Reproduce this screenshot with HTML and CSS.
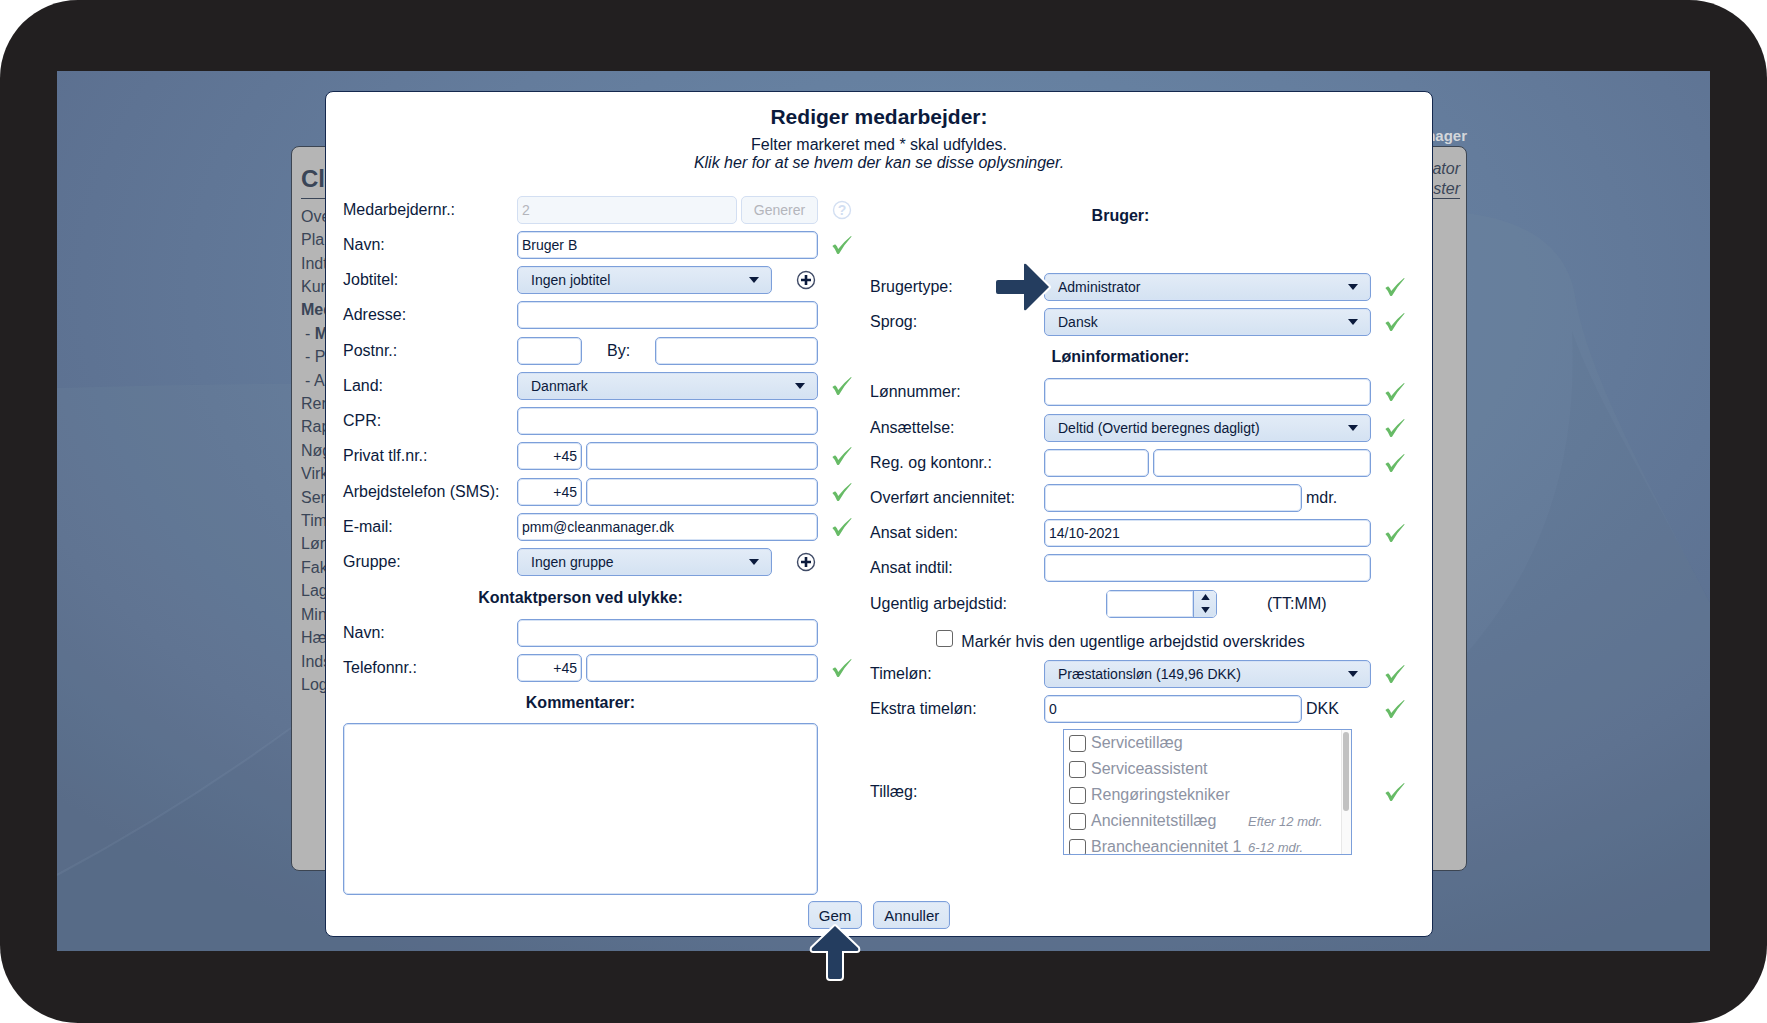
FILE: index.html
```html
<!DOCTYPE html>
<html lang="da">
<head>
  <meta charset="UTF-8">
  <meta name="viewport" content="width=device-width, initial-scale=1.0">
  <title>Rediger medarbejder</title>
  <link rel="stylesheet" href="styles.css">
</head>
<body>
  <!-- Shared icons -->
  <svg class="sprite" aria-hidden="true">
    <symbol id="check" viewBox="0 0 20 20">
      <path d="M0.4 11 Q2.4 9 3.4 9.6 Q5 11 6.2 14 Q12 6.6 19 1 L19.6 1.4 Q12.6 9 7.2 18.4 Q6 19.6 5 18.4 Q3 13.4 0.4 11Z" fill="#67bb66"/>
    </symbol>
    <symbol id="plus" viewBox="0 0 20 20">
      <circle cx="10" cy="10" r="8.5" fill="#fff" stroke="#3f4a66" stroke-width="1.4"/>
      <path d="M10 5v10M5 10h10" stroke="#0b1a3c" stroke-width="2.6"/>
    </symbol>
  </svg>

  <div class="bezel">
    <div class="screen">
      <svg class="wallpaper" viewBox="0 0 1653 880" preserveAspectRatio="none" aria-hidden="true">
        <path d="M0 317 Q200 311 400 313 L1280 139 L1400 141 C1475 148 1511 180 1518 225 C1530 300 1590 410 1653 532 V880 H0Z" fill="#7d93a6" fill-opacity=".13"/>
        <path d="M0 804 Q120 740 234 657 L900 300 L1410 582 C1480 500 1522 400 1515 260 C1535 320 1590 410 1653 532 V880 H0Z" fill="#4a6084" fill-opacity=".1"/>
        <path d="M0 804 Q120 740 234 657" fill="none" stroke="#8fa3bb" stroke-opacity=".15" stroke-width="2"/>
      </svg>

      <!-- Page behind the dialog -->
      <div class="app">
        <div class="company">nager</div>
        <div class="panel">
          <div class="panel-head">
            <div class="logo">Cl</div>
            <div class="user">ator<br>ster</div>
          </div>
          <nav class="menu">
            <a href="#">Ove</a>
            <a href="#">Pla</a>
            <a href="#">Indt</a>
            <a href="#">Kun</a>
            <a href="#"><b>Med</b></a>
            <a href="#" class="sub">- <b>M</b></a>
            <a href="#" class="sub">- P</a>
            <a href="#" class="sub">- A</a>
            <a href="#">Ren</a>
            <a href="#">Rap</a>
            <a href="#">Nøg</a>
            <a href="#">Virk</a>
            <a href="#">Ser</a>
            <a href="#">Tim</a>
            <a href="#">Løn</a>
            <a href="#">Fak</a>
            <a href="#">Lag</a>
            <a href="#">Min</a>
            <a href="#">Hæ</a>
            <a href="#">Inds</a>
            <a href="#">Log</a>
          </nav>
        </div>
      </div>

      <!-- Edit employee dialog -->
      <div class="overlay">
        <form class="modal">
          <header>
            <h1>Rediger medarbejder:</h1>
            <p>Felter markeret med * skal udfyldes.</p>
            <p><a href="#"><i>Klik her for at se hvem der kan se disse oplysninger.</i></a></p>
          </header>

          <div class="columns">
            <div class="column left">
              <div class="row">
                <label for="number">Medarbejdernr.:</label>
                <div class="control">
                  <input type="text" id="number" value="2" disabled>
                  <button type="button" class="generate" disabled>Generer</button>
                </div>
                <svg class="icon help" viewBox="0 0 20 20"><circle cx="10" cy="10" r="8.5" fill="none" stroke="#d3dff2" stroke-width="1.4"/><text x="10" y="15" text-anchor="middle">?</text></svg>
              </div>
              <div class="row">
                <label for="name">Navn:</label>
                <div class="control"><input type="text" id="name" value="Bruger B"></div>
                <svg class="icon"><use href="#check"/></svg>
              </div>
              <div class="row">
                <label for="jobtitle">Jobtitel:</label>
                <div class="control">
                  <select id="jobtitle"><option>Ingen jobtitel</option></select>
                  <button type="button" class="add" aria-label="Tilføj jobtitel"><svg class="icon"><use href="#plus"/></svg></button>
                </div>
              </div>
              <div class="row">
                <label for="address">Adresse:</label>
                <div class="control"><input type="text" id="address"></div>
              </div>
              <div class="row">
                <label for="zip">Postnr.:</label>
                <div class="control">
                  <input type="text" id="zip" class="short">
                  <label for="city" class="city">By:</label>
                  <input type="text" id="city">
                </div>
              </div>
              <div class="row">
                <label for="country">Land:</label>
                <div class="control"><select id="country"><option>Danmark</option></select></div>
                <svg class="icon"><use href="#check"/></svg>
              </div>
              <div class="row">
                <label for="cpr">CPR:</label>
                <div class="control"><input type="text" id="cpr"></div>
              </div>
              <div class="row">
                <label for="private">Privat tlf.nr.:</label>
                <div class="control">
                  <input type="text" class="short code" value="+45" aria-label="Landekode">
                  <input type="text" id="private">
                </div>
                <svg class="icon"><use href="#check"/></svg>
              </div>
              <div class="row">
                <label for="work">Arbejdstelefon (SMS):</label>
                <div class="control">
                  <input type="text" class="short code" value="+45" aria-label="Landekode">
                  <input type="text" id="work">
                </div>
                <svg class="icon"><use href="#check"/></svg>
              </div>
              <div class="row">
                <label for="email">E-mail:</label>
                <div class="control"><input type="text" id="email" value="pmm@cleanmanager.dk"></div>
                <svg class="icon"><use href="#check"/></svg>
              </div>
              <div class="row">
                <label for="group">Gruppe:</label>
                <div class="control">
                  <select id="group"><option>Ingen gruppe</option></select>
                  <button type="button" class="add" aria-label="Tilføj gruppe"><svg class="icon"><use href="#plus"/></svg></button>
                </div>
              </div>
              <h2>Kontaktperson ved ulykke:</h2>
              <div class="row">
                <label for="contact">Navn:</label>
                <div class="control"><input type="text" id="contact"></div>
              </div>
              <div class="row">
                <label for="contactPhone">Telefonnr.:</label>
                <div class="control">
                  <input type="text" class="short code" value="+45" aria-label="Landekode">
                  <input type="text" id="contactPhone">
                </div>
                <svg class="icon"><use href="#check"/></svg>
              </div>
              <h2><label for="comments">Kommentarer:</label></h2>
              <textarea id="comments"></textarea>
            </div>

            <div class="column right">
              <h2>Bruger:</h2>
              <div class="row">
                <label for="usertype">Brugertype:</label>
                <div class="control">
                  <select id="usertype"><option>Administrator</option></select>
                  <svg class="arrow-right" viewBox="0 0 60 52" aria-hidden="true">
                    <path d="M5 19 H31 V4 Q31 2 33 3 L56 26 L33 49 Q31 50 31 48 V33 H5 Q3 33 3 31 V21 Q3 19 5 19Z"/>
                  </svg>
                </div>
                <svg class="icon"><use href="#check"/></svg>
              </div>
              <div class="row">
                <label for="language">Sprog:</label>
                <div class="control"><select id="language"><option>Dansk</option></select></div>
                <svg class="icon"><use href="#check"/></svg>
              </div>
              <h2>Løninformationer:</h2>
              <div class="row">
                <label for="payNumber">Lønnummer:</label>
                <div class="control"><input type="text" id="payNumber"></div>
                <svg class="icon"><use href="#check"/></svg>
              </div>
              <div class="row">
                <label for="employment">Ansættelse:</label>
                <div class="control"><select id="employment"><option>Deltid (Overtid beregnes dagligt)</option></select></div>
                <svg class="icon"><use href="#check"/></svg>
              </div>
              <div class="row">
                <label for="reg">Reg. og kontonr.:</label>
                <div class="control">
                  <input type="text" id="reg" class="reg">
                  <input type="text" aria-label="Kontonr.">
                </div>
                <svg class="icon"><use href="#check"/></svg>
              </div>
              <div class="row">
                <label for="seniority">Overført anciennitet:</label>
                <div class="control">
                  <input type="text" id="seniority">
                  <span class="unit">mdr.</span>
                </div>
              </div>
              <div class="row">
                <label for="from">Ansat siden:</label>
                <div class="control"><input type="text" id="from" value="14/10-2021"></div>
                <svg class="icon"><use href="#check"/></svg>
              </div>
              <div class="row">
                <label for="until">Ansat indtil:</label>
                <div class="control"><input type="text" id="until"></div>
              </div>
              <div class="row">
                <label for="hours">Ugentlig arbejdstid:</label>
                <div class="control hours">
                  <div class="spinner">
                    <input type="text" id="hours">
                    <div class="steps">
                      <button type="button" aria-label="Op"><svg viewBox="0 0 10 7"><path d="M0 7 L5 0 L10 7Z"/></svg></button>
                      <button type="button" aria-label="Ned"><svg viewBox="0 0 10 7"><path d="M0 0 L5 7 L10 0Z"/></svg></button>
                    </div>
                  </div>
                  <span>(TT:MM)</span>
                </div>
              </div>
              <div class="mark">
                <input type="checkbox" id="mark">
                <label for="mark">Markér hvis den ugentlige arbejdstid overskrides</label>
              </div>
              <div class="row">
                <label for="wage">Timeløn:</label>
                <div class="control"><select id="wage"><option>Præstationsløn (149,96 DKK)</option></select></div>
                <svg class="icon"><use href="#check"/></svg>
              </div>
              <div class="row">
                <label for="extra">Ekstra timeløn:</label>
                <div class="control">
                  <input type="text" id="extra" value="0">
                  <span class="unit">DKK</span>
                </div>
                <svg class="icon"><use href="#check"/></svg>
              </div>
              <div class="row">
                <span>Tillæg:</span>
                <div class="supplements">
                  <div class="list">
                    <label><input type="checkbox"> <span>Servicetillæg</span></label>
                    <label><input type="checkbox"> <span>Serviceassistent</span></label>
                    <label><input type="checkbox"> <span>Rengøringstekniker</span></label>
                    <label><input type="checkbox"> <span>Anciennitetstillæg</span> <i>Efter 12 mdr.</i></label>
                    <label><input type="checkbox"> <span>Brancheanciennitet 1</span> <i>6-12 mdr.</i></label>
                  </div>
                  <div class="track"><div class="thumb"></div></div>
                </div>
                <svg class="icon"><use href="#check"/></svg>
              </div>
            </div>
          </div>

          <footer>
            <div class="save">
              <button type="submit">Gem</button>
              <svg class="arrow-up" viewBox="0 0 52 58" aria-hidden="true">
                <path d="M26 3 L49 25 Q50 28 48 28 H33 V54 Q33 56 31 56 H21 Q19 56 19 54 V28 H4 Q2 28 3 25Z"/>
              </svg>
            </div>
            <button type="button">Annuller</button>
          </footer>
        </form>
      </div>
    </div>
  </div>
</body>
</html>
```

FILE: styles.css
```css
* {
  box-sizing: border-box;
}
body {
  margin: 0;
  background: #fff;
  color: #0b1a3c;
  font-family: "Liberation Sans", Arial, sans-serif;
  font-size: 16px;
}
a {
  color: inherit;
  text-decoration: none;
}
.sprite {
  display: none;
}

/* Device frame */
.bezel {
  display: flex;
  min-height: 100vh;
  padding: 71px 57px 72px;
  background: #221f20;
  border-radius: 78px;
}
.screen {
  position: relative;
  flex: 1;
  display: flex;
  padding: 55px 9px 80px 0;
  background: radial-gradient(ellipse 75% 85% at 55% 25%, #6a88a8 0%, #647c9c 45%, #5c7090 80%, #546785 100%);
}
.wallpaper {
  position: absolute;
  inset: 0;
  width: 100%;
  height: 100%;
}

/* Page behind the dialog */
.app {
  position: relative;
  display: flex;
  flex-direction: column;
  width: 1176px;
  max-width: 95%;
  margin: 0 auto;
}
.company {
  line-height: 20px;
  color: #d3d6da;
  font-size: 15px;
  font-weight: bold;
  text-align: right;
}
.panel {
  flex: 1;
  padding: 12px 6px 0 9px;
  background: #b5b5b5;
  border: 1px solid #3c4552;
  border-radius: 8px;
  color: #3a4557;
}
.panel-head {
  display: flex;
  justify-content: space-between;
  align-items: center;
  height: 40px;
  border-bottom: 1px solid #3a4557;
}
.logo {
  font-size: 24px;
  font-weight: bold;
}
.user {
  line-height: 20px;
  font-style: italic;
  text-align: right;
}
.menu {
  display: grid;
  grid-auto-rows: 1fr;
  align-items: center;
  height: 70%;
  padding-top: 6px;
}
.menu .sub {
  padding-left: 4px;
}

/* Dialog */
.overlay {
  position: absolute;
  inset: 20px 9px 14px 0;
  display: flex;
  justify-content: center;
}
.modal {
  display: flex;
  flex-direction: column;
  width: 1108px;
  max-width: 95%;
  padding: 12px 13px 7px 17px;
  background: #fff;
  border: 1px solid #14284e;
  border-radius: 8px;
}
header {
  margin-bottom: 20px;
  padding-right: 4px;
  text-align: center;
}
h1 {
  margin: 0 0 6px;
  font-size: 21px;
  line-height: 26px;
}
header p {
  margin: 0;
  line-height: 18px;
}
.columns {
  flex: 1;
  display: grid;
  grid-template-columns: minmax(0, 523fr) minmax(0, 549fr);
  gap: 4px;
}
.column {
  display: grid;
  grid-template-columns: minmax(0, 1fr);
}
.left {
  grid-template-rows: repeat(15, 1fr) 176px;
}
.right {
  grid-template-rows: 77px repeat(13, 1fr) 130px;
  padding-bottom: 40px;
}
.row {
  display: grid;
  grid-template-columns: 174px minmax(0, 1fr) 48px;
  align-items: center;
}
h2 {
  align-self: center;
  margin: 0;
  padding-right: 48px;
  font-size: 16px;
  text-align: center;
}
.right h2:first-child {
  padding-bottom: 30px;
}
.control {
  position: relative;
  display: flex;
  align-items: center;
  gap: 4px;
}

/* Fields */
input[type="text"], select, textarea, button {
  height: 28px;
  margin: 0;
  border: 1px solid #7c9fda;
  border-radius: 5px;
  box-shadow: inset 0 0 0 1px #d5e2f5;
  background-color: #fff;
  color: #0b1a3c;
  font-family: inherit;
  font-size: 14px;
}
input[type="text"] {
  flex: 1;
  min-width: 0;
  padding: 0 4px;
}
select {
  flex: 1;
  min-width: 0;
  appearance: none;
  padding: 0 13px;
  background: url("data:image/svg+xml,%3Csvg xmlns='http://www.w3.org/2000/svg' viewBox='0 0 10 6'%3E%3Cpath d='M0 0H10L5 6Z' fill='%230b1a3c'/%3E%3C/svg%3E") no-repeat right 12px center / 10px 6px, linear-gradient(#e3ecf7, #d4e2f2);
}
button {
  padding: 0 10px;
  background: linear-gradient(#e3ecf7, #d8e5f4);
  cursor: pointer;
}
input[type="text"]:disabled, button:disabled {
  border-color: #d3dff2;
  box-shadow: none;
  background: #f3f7fb;
  color: #b3b5bb;
}
input[type="text"].short {
  flex: none;
  width: 65px;
}
input[type="text"].reg {
  flex: none;
  width: 105px;
}
.code {
  text-align: right;
}
.generate {
  width: 77px;
}
.city {
  width: 65px;
  padding-left: 21px;
}
.unit {
  width: 65px;
}
textarea {
  height: 172px;
  margin: 2px 48px 0 0;
  resize: none;
}
.icon {
  display: block;
  width: 20px;
  height: 20px;
  justify-self: center;
}
.help text {
  fill: #d3dff2;
  font-size: 14px;
  font-weight: bold;
}
.add {
  width: 42px;
  padding: 0 0 0 18px;
  border: none;
  box-shadow: none;
  background: none;
}

/* Working hours */
.hours {
  gap: 50px;
  padding-left: 62px;
}
.spinner {
  display: flex;
  width: 111px;
  height: 28px;
  border: 1px solid #7c9fda;
  border-radius: 5px;
  overflow: hidden;
}
.spinner input[type="text"] {
  height: 26px;
  border: none;
  border-radius: 0;
}
.steps {
  display: flex;
  flex-direction: column;
  width: 23px;
  background: linear-gradient(#e3ecf7, #d4e2f2);
  border-left: 1px solid #7c9fda;
}
.steps button {
  display: flex;
  flex: 1;
  align-items: center;
  justify-content: center;
  padding: 0;
  border: none;
  box-shadow: none;
  background: none;
}
.steps svg {
  width: 9px;
  height: 6px;
  fill: #0b1a3c;
}
.mark {
  display: flex;
  justify-content: center;
  align-items: center;
  gap: 8px;
  padding-right: 48px;
}
.mark label {
  padding-top: 6px;
}
input[type="checkbox"] {
  appearance: none;
  flex: none;
  width: 17px;
  height: 17px;
  margin: 0;
  background: #fff;
  border: 1px solid #666;
  border-radius: 3px;
}

/* Supplements list */
.supplements {
  display: flex;
  height: 126px;
  margin: 0 19px;
  border: 1px solid #7c9fda;
}
.list {
  flex: 1;
  overflow: hidden;
  padding-left: 5px;
}
.list label {
  display: grid;
  grid-template-columns: 22px 157px 1fr;
  align-items: center;
  height: 26px;
  color: #8d93a3;
  white-space: nowrap;
}
.list i {
  font-size: 13px;
}
.track {
  width: 10px;
  padding: 2px 1px;
  background: #fafafa;
  border-left: 1px solid #e8e8e8;
}
.thumb {
  width: 6px;
  height: 79px;
  background: #c1c1c1;
  border-radius: 3px;
}

/* Buttons and pointers */
footer {
  display: flex;
  justify-content: center;
  gap: 11px;
  margin-top: 4px;
  padding-right: 4px;
}
footer button {
  font-size: 15px;
}
.save {
  position: relative;
}
.arrow-right, .arrow-up {
  position: absolute;
  fill: #243d5f;
  stroke: #fff;
  stroke-width: 4px;
  stroke-linejoin: round;
  paint-order: stroke;
}
.arrow-right {
  left: -51px;
  top: -12px;
  width: 60px;
  height: 52px;
}
.arrow-up {
  left: 1px;
  top: 22px;
  width: 52px;
  height: 58px;
}
```
